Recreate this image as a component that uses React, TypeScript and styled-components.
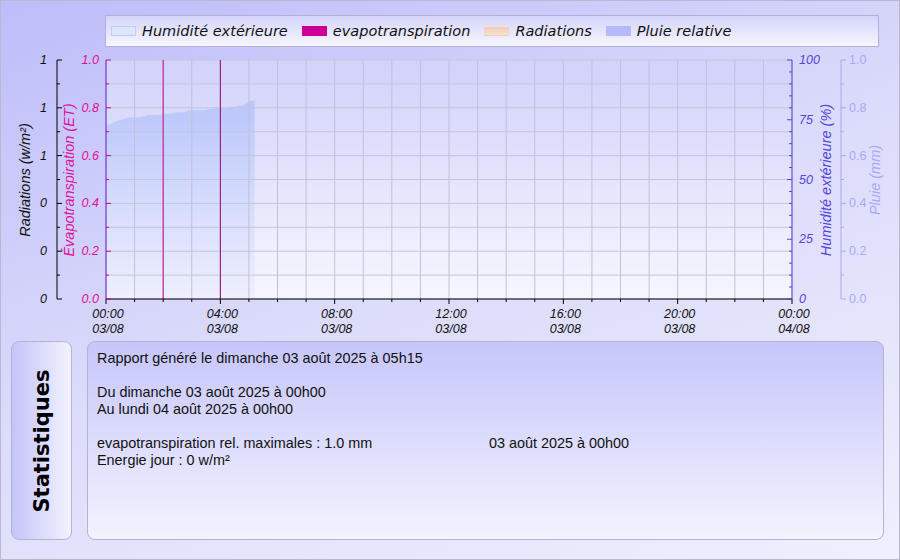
import React from "react";
import styled, { createGlobalStyle } from "styled-components";

const Global = createGlobalStyle`
  html, body { margin: 0; padding: 0; }
  body { font-family: "Liberation Sans", Arial, sans-serif; }
`;

const Page = styled.div`
  width: 900px; height: 560px; box-sizing: border-box;
  border: 1px solid #b8b8d0;
  background: linear-gradient(160deg, #bdbdfa 0%, #dcdcfb 50%, #efeffd 100%);
  display: flex; flex-direction: column;
`;
const LegendRow = styled.div`
  display: flex; padding: 14px 20px 0 104px; height: 34px;
`;
const Legend = styled.div`
  flex: 1; display: flex; align-items: center; gap: 14px; padding-left: 5px;
  border: 1px solid #b0b0d8; height: 32px; box-sizing: border-box;
  background: linear-gradient(180deg, #d4d4fb, #f6f6fe);
  font: oblique 14.5px "DejaVu Sans", sans-serif; color: #111;
`;
const LegendItem = styled.div`display: flex; align-items: center; gap: 6px;`;
const Swatch = styled.span<{ $bg: string; $border?: string }>`
  width: 25px; height: 10px; background: ${p => p.$bg};
  border: 1px solid ${p => p.$border || "transparent"}; box-sizing: border-box;
`;
const ChartSvg = styled.svg`display: block; flex: none;`;
const Stats = styled.div`
  display: flex; gap: 15px; padding: 1px 15px 0 10px; height: 199px;
`;
const Tab = styled.div`
  width: 61px; box-sizing: border-box; border: 1px solid #b4b4cc; border-radius: 8px;
  background: linear-gradient(90deg, #c4c4fa, #f2f2fe);
  display: flex; align-items: center; justify-content: center;
`;
const TabText = styled.div`
  transform: rotate(-90deg); white-space: nowrap;
  font: bold 21px "DejaVu Sans", sans-serif; color: #000;
`;
const Content = styled.div`
  flex: 1; box-sizing: border-box; border: 1px solid #b4b4cc; border-radius: 8px;
  background: linear-gradient(180deg, #c6c6fb, #f3f3fe);
  padding: 8px 9px; font: 14.4px "Liberation Sans", Arial, sans-serif; color: #111; line-height: 17px;
`;
const Line = styled.div`display: flex; min-height: 17px;`;
const Col = styled.span<{ $w?: number }>`width: ${p => (p.$w ? p.$w + "px" : "auto")};`;

const X0 = 105, X1 = 791, Y0 = 60, Y1 = 299;
const hx = (h: number) => X0 + ((X1 - X0) * h) / 24;
const yv = (f: number) => Y1 - (Y1 - Y0) * f;
const TOP = 49;

const hum = [73, 73, 74, 74.5, 75, 75.5, 76, 76, 76, 76, 76.5, 77, 77, 77, 77, 77.5, 77.5, 77.5, 78, 78, 78, 78.5, 79, 79, 79, 79, 79, 79.5, 79.5, 80, 80, 80, 80, 80.5, 80.5, 81, 81, 82, 83, 83];

export default function App() {
  const hPts = hum.map((v, i) => `${hx((i / (hum.length - 1)) * 5.2)},${yv(v / 100)}`);
  const hPath = `M${X0},${Y1} L${X0},${yv(hum[0] / 100)} ${hPts.join(" ")} L${hx(5.2)},${Y1} Z`;
  const ticks10 = Array.from({ length: 11 }, (_, i) => i);
  return (
    <>
      <Global />
      <Page>
        <LegendRow>
          <Legend>
            <LegendItem><Swatch $bg="#dde6fd" $border="#c4cdf0" />Humidité extérieure</LegendItem>
            <LegendItem><Swatch $bg="#cc0099" />evapotranspiration</LegendItem>
            <LegendItem><Swatch $bg="linear-gradient(180deg,#f4c8c0,#f3e4c8)" />Radiations</LegendItem>
            <LegendItem><Swatch $bg="#b6b9f8" />Pluie relative</LegendItem>
          </Legend>
        </LegendRow>
        <ChartSvg width={898} height={291} viewBox={`0 ${TOP} 898 291`}>
          <defs>
            <linearGradient id="plot" x1="0" y1="0" x2="0" y2="1">
              <stop offset="0" stopColor="#d2d2fb" />
              <stop offset="1" stopColor="#f6f6fe" />
            </linearGradient>
            <linearGradient id="hum" x1="0" y1="0" x2="0" y2="1">
              <stop offset="0" stopColor="#bac6fb" />
              <stop offset="1" stopColor="#eef0fe" />
            </linearGradient>
          </defs>
          <rect x={X0} y={Y0} width={X1 - X0} height={Y1 - Y0} fill="url(#plot)" />
          <path d={hPath} fill="url(#hum)" />
          {Array.from({ length: 25 }, (_, i) => (
            <line key={"v" + i} x1={hx(i)} x2={hx(i)} y1={Y0} y2={Y1} stroke="#c0c0d8" strokeWidth={1} />
          ))}
          {ticks10.map(i => (
            <line key={"h" + i} x1={X0} x2={X1} y1={yv(i / 10)} y2={yv(i / 10)} stroke="#c4c4da" strokeWidth={1} />
          ))}
          <line x1={hx(2)} x2={hx(2)} y1={Y0} y2={Y1} stroke="#cc0099" />
          <line x1={hx(4)} x2={hx(4)} y1={Y0} y2={Y1} stroke="#990077" />
          <line x1={X0} x2={X1} y1={Y1} y2={Y1} stroke="#000" />
          {Array.from({ length: 25 }, (_, i) => (
            <line key={"t" + i} x1={hx(i)} x2={hx(i)} y1={Y1} y2={Y1 + (i % 4 === 0 ? 5 : 3)} stroke="#000" />
          ))}
          <g fontFamily="Liberation Sans, sans-serif" fontStyle="italic" fontSize="12.5">
            {[0, 4, 8, 12, 16, 20, 24].map(h => (
              <g key={h} textAnchor="middle" fill="#111">
                <text x={hx(h) + 2} y={318}>{h === 24 ? "00:00" : String(h).padStart(2, "0") + ":00"}</text>
                <text x={hx(h) + 2} y={333}>{h === 24 ? "04/08" : "03/08"}</text>
              </g>
            ))}
            <line x1={56} x2={56} y1={Y0} y2={Y1} stroke="#000" />
            {ticks10.map(i => (
              <line key={"r" + i} x1={56} x2={i % 2 === 0 ? 61 : 59} y1={yv(i / 10)} y2={yv(i / 10)} stroke="#000" />
            ))}
            {["0", "0", "0", "1", "1", "1"].map((t, i) => (
              <text key={"rl" + i} x={46} y={yv(i / 5) + 4} textAnchor="end" fill="#111">{t}</text>
            ))}
            <text transform={`translate(29 180) rotate(-90)`} textAnchor="middle" fill="#111" fontSize="14.5">Radiations (w/m²)</text>
            <line x1={X0} x2={X0} y1={Y0} y2={Y1} stroke="#6a1ed0" />
            {ticks10.map(i => (
              <line key={"e" + i} x1={X0} x2={X0 + (i % 2 === 0 ? 5 : 3)} y1={yv(i / 10)} y2={yv(i / 10)} stroke="#cc0099" />
            ))}
            {[0, 0.2, 0.4, 0.6, 0.8, 1].map(v => (
              <text key={"el" + v} x={98} y={yv(v) + 4} textAnchor="end" fill="#dd1199">{v.toFixed(1)}</text>
            ))}
            <text transform={`translate(73 180) rotate(-90)`} textAnchor="middle" fill="#dd1199" fontSize="14.5">Évapotranspiration (ET)</text>
            <line x1={X1} x2={X1} y1={Y0} y2={Y1} stroke="#5544dd" />
            {Array.from({ length: 21 }, (_, i) => (
              <line key={"hu" + i} x1={X1} x2={X1 - (i % 5 === 0 ? 5 : 3)} y1={yv(i / 20)} y2={yv(i / 20)} stroke="#5544dd" />
            ))}
            {[0, 25, 50, 75, 100].map(v => (
              <text key={"hl" + v} x={798} y={yv(v / 100) + 4} fill="#5544dd">{v}</text>
            ))}
            <text transform={`translate(830 180) rotate(-90)`} textAnchor="middle" fill="#5544dd" fontSize="14.5">Humidité extérieure (%)</text>
          </g>
          <g fontFamily="Liberation Sans, sans-serif" fontSize="12.5" fill="#a8a8fb">
            <line x1={840} x2={840} y1={Y0} y2={Y1} stroke="#a8a8fb" />
            {ticks10.map(i => (
              <line key={"p" + i} x1={840} x2={i % 2 === 0 ? 845 : 843} y1={yv(i / 10)} y2={yv(i / 10)} stroke="#a8a8fb" />
            ))}
            {[0, 0.2, 0.4, 0.6, 0.8, 1].map(v => (
              <text key={"pl" + v} x={848} y={yv(v) + 4}>{v.toFixed(1)}</text>
            ))}
            <text transform={`translate(879 180) rotate(-90)`} textAnchor="middle" fontStyle="italic" fontSize="14.5">Pluie (mm)</text>
          </g>
        </ChartSvg>
        <Stats>
          <Tab><TabText>Statistiques</TabText></Tab>
          <Content>
            <Line>Rapport généré le dimanche 03 août 2025 à 05h15</Line>
            <Line />
            <Line>Du dimanche 03 août 2025 à 00h00</Line>
            <Line>Au lundi 04 août 2025 à 00h00</Line>
            <Line />
            <Line><Col $w={392}>evapotranspiration rel. maximales : 1.0 mm</Col><Col>03 août 2025 à 00h00</Col></Line>
            <Line>Energie jour : 0 w/m²</Line>
          </Content>
        </Stats>
      </Page>
    </>
  );
}
